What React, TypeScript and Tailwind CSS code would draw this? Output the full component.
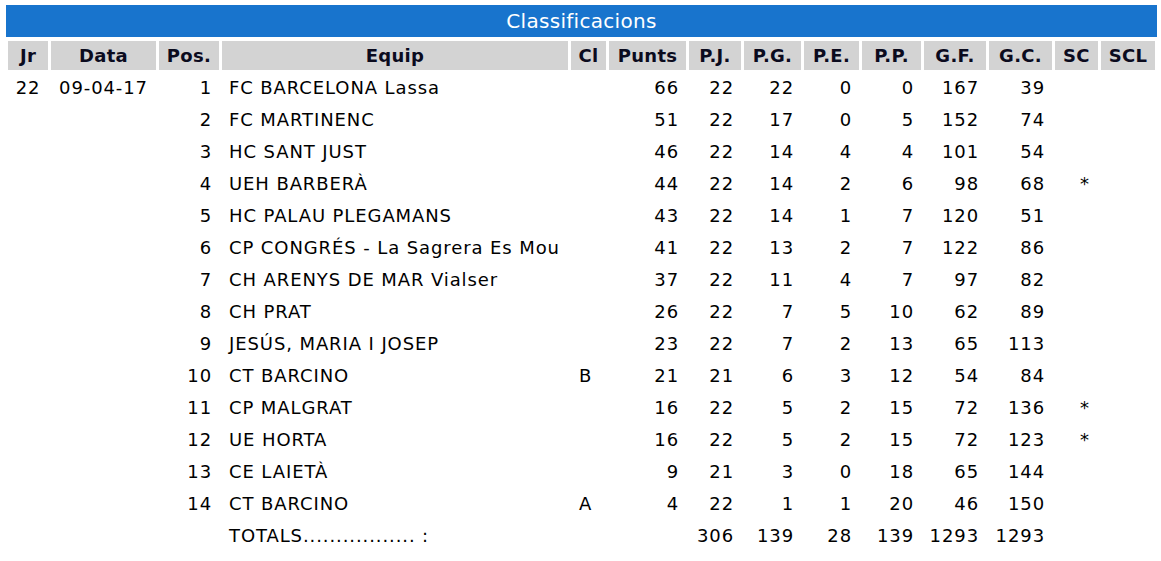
const heads = ['Jr', 'Data', 'Pos.', 'Equip', 'Cl', 'Punts', 'P.J.', 'P.G.', 'P.E.', 'P.P.', 'G.F.', 'G.C.', 'SC', 'SCL']

type Row = {
  pos: number
  team: string
  cl?: string
  pts: number
  pj: number
  pg: number
  pe: number
  pp: number
  gf: number
  gc: number
  sc?: string
}

const rows: Row[] = [
  { pos: 1, team: 'FC BARCELONA Lassa', pts: 66, pj: 22, pg: 22, pe: 0, pp: 0, gf: 167, gc: 39 },
  { pos: 2, team: 'FC MARTINENC', pts: 51, pj: 22, pg: 17, pe: 0, pp: 5, gf: 152, gc: 74 },
  { pos: 3, team: 'HC SANT JUST', pts: 46, pj: 22, pg: 14, pe: 4, pp: 4, gf: 101, gc: 54 },
  { pos: 4, team: 'UEH BARBERÀ', pts: 44, pj: 22, pg: 14, pe: 2, pp: 6, gf: 98, gc: 68, sc: '*' },
  { pos: 5, team: 'HC PALAU PLEGAMANS', pts: 43, pj: 22, pg: 14, pe: 1, pp: 7, gf: 120, gc: 51 },
  { pos: 6, team: 'CP CONGRÉS - La Sagrera Es Mou', pts: 41, pj: 22, pg: 13, pe: 2, pp: 7, gf: 122, gc: 86 },
  { pos: 7, team: 'CH ARENYS DE MAR Vialser', pts: 37, pj: 22, pg: 11, pe: 4, pp: 7, gf: 97, gc: 82 },
  { pos: 8, team: 'CH PRAT', pts: 26, pj: 22, pg: 7, pe: 5, pp: 10, gf: 62, gc: 89 },
  { pos: 9, team: 'JESÚS, MARIA I JOSEP', pts: 23, pj: 22, pg: 7, pe: 2, pp: 13, gf: 65, gc: 113 },
  { pos: 10, team: 'CT BARCINO', cl: 'B', pts: 21, pj: 21, pg: 6, pe: 3, pp: 12, gf: 54, gc: 84 },
  { pos: 11, team: 'CP MALGRAT', pts: 16, pj: 22, pg: 5, pe: 2, pp: 15, gf: 72, gc: 136, sc: '*' },
  { pos: 12, team: 'UE HORTA', pts: 16, pj: 22, pg: 5, pe: 2, pp: 15, gf: 72, gc: 123, sc: '*' },
  { pos: 13, team: 'CE LAIETÀ', pts: 9, pj: 21, pg: 3, pe: 0, pp: 18, gf: 65, gc: 144 },
  { pos: 14, team: 'CT BARCINO', cl: 'A', pts: 4, pj: 22, pg: 1, pe: 1, pp: 20, gf: 46, gc: 150 },
]

const num = 'h-[29px] p-0 pr-[7px] text-right'

export default function App() {
  return (
    <div className="pl-[5px] pt-[5px] bg-white text-black text-[18px] leading-none" style={{ fontFamily: '"DejaVu Sans", Verdana, sans-serif' }}>
      <div className="mx-[1px] w-[1151px] h-[32px] bg-[#1874cd] text-white text-[20px] tracking-[0.3px] flex items-center justify-center">
        Classificacions
      </div>
      <table className="mt-[1px] w-[1153px] table-fixed border-separate border-spacing-[3px]">
        <colgroup>
          <col className="w-[40px]" />
          <col className="w-[105px]" />
          <col className="w-[60px]" />
          <col className="w-[346px]" />
          <col className="w-[35px]" />
          <col className="w-[77px]" />
          <col className="w-[52px]" />
          <col className="w-[57px]" />
          <col className="w-[55px]" />
          <col className="w-[59px]" />
          <col className="w-[62px]" />
          <col className="w-[63px]" />
          <col className="w-[43px]" />
          <col className="w-[54px]" />
        </colgroup>
        <thead>
          <tr>
            {heads.map((h) => (
              <th key={h} className="h-[29px] p-0 bg-[#d3d3d3] font-bold text-center text-[#0b0b1e] tracking-[0.3px]">
                {h}
              </th>
            ))}
          </tr>
        </thead>
        <tbody className="tracking-[0.9px]">
          {rows.map((r, i) => (
            <tr key={r.pos}>
              <td className="h-[29px] p-0 text-center">{i === 0 ? '22' : ''}</td>
              <td className="h-[29px] p-0 text-center">{i === 0 ? '09-04-17' : ''}</td>
              <td className={num}>{r.pos}</td>
              <td className="h-[29px] p-0 pl-[7px] text-left whitespace-nowrap">{r.team}</td>
              <td className="h-[29px] p-0 pl-[8px] text-left">{r.cl}</td>
              <td className={num}>{r.pts}</td>
              <td className={num}>{r.pj}</td>
              <td className={num}>{r.pg}</td>
              <td className={num}>{r.pe}</td>
              <td className={num}>{r.pp}</td>
              <td className={num}>{r.gf}</td>
              <td className={num}>{r.gc}</td>
              <td className="h-[29px] p-0 pl-[25px] text-left">{r.sc}</td>
              <td className="h-[29px] p-0"></td>
            </tr>
          ))}
          <tr>
            <td className="h-[29px] p-0"></td>
            <td className="h-[29px] p-0"></td>
            <td className="h-[29px] p-0"></td>
            <td className="h-[29px] p-0 pl-[7px] text-left whitespace-nowrap">TOTALS................. :</td>
            <td className="h-[29px] p-0"></td>
            <td className="h-[29px] p-0"></td>
            <td className={num}>306</td>
            <td className={num}>139</td>
            <td className={num}>28</td>
            <td className={num}>139</td>
            <td className={num}>1293</td>
            <td className={num}>1293</td>
            <td className="h-[29px] p-0"></td>
            <td className="h-[29px] p-0"></td>
          </tr>
        </tbody>
      </table>
    </div>
  )
}
